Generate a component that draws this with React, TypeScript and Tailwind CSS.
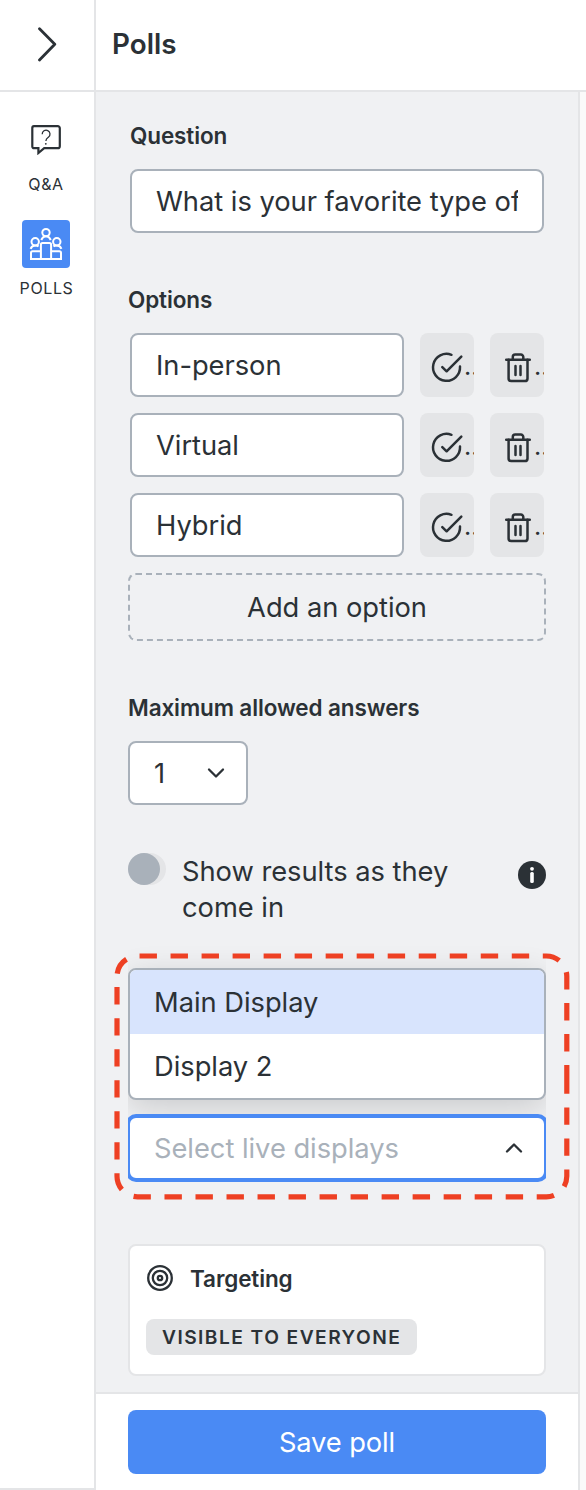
import { useState } from "react";

const INITIAL_OPTIONS = ["In-person", "Virtual", "Hybrid"];
const DISPLAYS = ["Main Display", "Display 2"];

function QuestionIcon() {
  return (
    <svg width="32" height="32" viewBox="0 0 32 32" fill="none" stroke="currentColor" strokeWidth="2.200">
      <path d="M4 3.200h23.800a2 2 0 0 1 2 2v18a2 2 0 0 1-2 2H14.200L8.400 30v-4.800H4a1.700 1.700 0 0 1-1.700-1.800V5A1.800 1.800 0 0 1 4 3.200Z" />
      <path d="M12.200 11.200a3.900 3.900 0 1 1 6.200 3c-1.500 1-2.500 1.600-2.500 3.800" strokeWidth="1.300" />
      <circle cx="15.800" cy="20.800" r=".900" fill="currentColor" stroke="none" />
    </svg>
  );
}

function PollsIcon() {
  return (
    <svg width="48" height="48" viewBox="0 0 48 48" fill="none" stroke="currentColor" strokeWidth="2">
      <circle cx="24" cy="12.600" r="3.700" />
      <circle cx="13.200" cy="21.700" r="3.700" />
      <circle cx="34.800" cy="21.700" r="3.700" />
      <path d="M19.200 20c1.200-2.500 2.800-3.700 4.800-3.700s3.600 1.200 4.800 3.700M8.600 28.800c.8-2.300 2.400-3.400 4.600-3.400 1.400 0 2.500.3 3.400 1M39.400 28.800c-.8-2.300-2.400-3.400-4.600-3.400-1.400 0-2.500.3-3.400 1" />
      <path d="M18.900 39V24.700a1.600 1.600 0 0 1 1.600-1.600h7a1.600 1.600 0 0 1 1.600 1.600V39" />
      <path d="M18.900 31.200h-8.300a1.600 1.600 0 0 0-1.600 1.600V39h30v-6.200a1.600 1.600 0 0 0-1.600-1.600h-8.300" />
    </svg>
  );
}

function CheckCircleIcon() {
  return (
    <svg className="shrink-0" width="34" height="34" viewBox="0 0 34 34" fill="none" stroke="currentColor" strokeWidth="2.500" strokeLinecap="round" strokeLinejoin="round">
      <path d="M21.500 4.800A13.500 13.500 0 1 0 30 16.600" />
      <path d="M12.300 17.200l4.300 4.100L31.300 6.600" />
    </svg>
  );
}

function TrashIcon() {
  return (
    <svg className="shrink-0" width="34" height="34" viewBox="0 0 34 34" fill="none" stroke="currentColor" strokeWidth="2.500" strokeLinecap="round" strokeLinejoin="round">
      <path d="M6.200 9.700h23.600M12.800 9.700V7a2.400 2.400 0 0 1 2.400-2.400h5.700A2.400 2.400 0 0 1 23.300 7v2.700" />
      <path d="M8.600 9.700v18.700a2.700 2.700 0 0 0 2.700 2.700h13.500a2.700 2.700 0 0 0 2.700-2.700V9.700" />
      <path d="M15.500 16v9M20.500 16v9" />
    </svg>
  );
}

function ChevronIcon({ up = false }: { up?: boolean }) {
  return (
    <svg width="18" height="12" viewBox="0 0 18 12" fill="none" stroke="currentColor" strokeWidth="2.300" strokeLinecap="round" strokeLinejoin="round">
      <path d={up ? "M2 9.500 9 2.500l7 7" : "M2 2.500l7 7 7-7"} />
    </svg>
  );
}

function TargetIcon() {
  return (
    <svg width="28" height="28" viewBox="0 0 28 28" fill="none" stroke="currentColor" strokeWidth="2.300">
      <circle cx="14" cy="14" r="11.800" />
      <circle cx="14" cy="14" r="7.200" />
      <circle cx="14" cy="14" r="2.200" />
    </svg>
  );
}

function InfoIcon() {
  return (
    <svg width="28" height="28" viewBox="0 0 28 28">
      <circle cx="14" cy="14" r="14" fill="#2b3136" />
      <circle cx="14" cy="7.800" r="1.900" fill="#fff" />
      <rect x="12.200" y="11" width="3.600" height="11" rx="1.500" fill="#fff" />
    </svg>
  );
}

function Label({ children }: { children: string }) {
  return <h2 className="text-[22.5px] leading-7 font-semibold tracking-[-0.12px]">{children}</h2>;
}

export default function App() {
  const [question, setQuestion] = useState("What is your favorite type of");
  const [options, setOptions] = useState(INITIAL_OPTIONS);

  const changeOption = (index: number, value: string) => {
    setOptions(options.map((option, i) => (i === index ? value : option)));
  };

  return (
    <div className="flex h-[1490px] w-[586px] flex-col overflow-hidden bg-white font-['Inter',sans-serif] text-[#2b3136]">
      <header className="flex h-[92px] shrink-0 border-b-2 border-[#e4e5e7]">
        <button className="flex w-24 items-center justify-center border-r-2 border-[#e4e5e7]" aria-label="Collapse">
          <svg width="20" height="36" viewBox="0 0 20 36" fill="none" stroke="currentColor" strokeWidth="2.800" strokeLinecap="round" strokeLinejoin="round">
            <path d="M2.500 1.800 17.800 17.200 2.500 33" />
          </svg>
        </button>
        <h1 className="pt-[26px] pl-4 text-[27.8px] leading-9 font-semibold">Polls</h1>
      </header>

      <div className="flex min-h-0 flex-1">
        <nav className="flex w-24 shrink-0 flex-col items-center border-r-2 border-b-2 border-[#e4e5e7] pt-[31px] pr-0.5">
          <button className="flex flex-col items-center">
            <QuestionIcon />
            <span className="mt-[19px] text-[16px] leading-5 tracking-[0.6px]">Q&amp;A</span>
          </button>
          <button className="mt-[26px] flex flex-col items-center">
            <span className="rounded bg-[#4a8af4] text-white">
              <PollsIcon />
            </span>
            <span className="mt-[10px] pl-px text-[16px] leading-5 tracking-[0.6px]">POLLS</span>
          </button>
        </nav>

        <main className="flex w-[484px] shrink-0 flex-col border-r-2 border-[#e4e5e7]">
          <div className="flex h-[1300px] flex-col bg-[#f0f1f3] px-8 pt-[30px] text-[27.3px] leading-9 tracking-[-0.03px]">
            <div className="px-0.5">
              <Label>Question</Label>
              <input
                className="mt-[19px] block h-16 w-full rounded-lg border-2 border-[#a9b1ba] bg-white px-6 outline-none"
                value={question}
                onChange={(e) => setQuestion(e.target.value)}
              />
            </div>

            <div className="mt-[53px]">
              <Label>Options</Label>
              <div className="mt-[19px] flex flex-col gap-4 px-0.5">
                {options.map((option, i) => (
                  <div key={i} className="flex gap-4">
                    <input
                      className="h-16 w-[274px] rounded-lg border-2 border-[#a9b1ba] bg-white px-6 outline-none"
                      value={option}
                      onChange={(e) => changeOption(i, e.target.value)}
                    />
                    <button className="flex h-16 w-[54px] items-center overflow-hidden rounded-lg bg-[#e4e5e7] pt-1 pl-2.5">
                      <CheckCircleIcon />
                      <span className="pb-0.5 text-[25px]">...</span>
                    </button>
                    <button className="flex h-16 w-[54px] items-center overflow-hidden rounded-lg bg-[#e4e5e7] pt-1 pl-2.5">
                      <TrashIcon />
                      <span className="pb-0.5 text-[25px]">...</span>
                    </button>
                  </div>
                ))}
              </div>
              <button className="mt-4 h-[68px] w-full rounded-lg border-2 border-dashed border-[#a9b1ba] pt-0.5">
                Add an option
              </button>
            </div>

            <div className="mt-[53px]">
              <Label>Maximum allowed answers</Label>
              <button className="mt-[19px] flex h-16 w-[120px] items-center justify-between rounded-lg border-2 border-[#a9b1ba] bg-white pr-[21px] pl-6">
                <span className="pt-0.5">1</span>
                <ChevronIcon />
              </button>
            </div>

            <div className="mt-12 flex">
              <div className="h-8 w-[38px] shrink-0 rounded-full bg-[#e4e5e7]">
                <div className="size-8 rounded-full bg-[#a9b1ba]" />
              </div>
              <p className="mt-px ml-4 w-[280px]">Show results as they come in</p>
              <div className="mt-2 ml-auto">
                <InfoIcon />
              </div>
            </div>

            <div className="relative mt-[42px]">
              <div className="overflow-x-clip">
                <ul className="rounded-lg border-2 border-[#a9b1ba] bg-white shadow-[0_8px_32px_rgba(0,0,0,0.16)]">
                  {DISPLAYS.map((display) => (
                    <li key={display} className="flex h-16 items-center px-6 pt-0.5 first:rounded-t-md first:bg-[#d8e4fd]">
                      {display}
                    </li>
                  ))}
                </ul>
                <div className="relative mt-4 flex h-16 items-center justify-between rounded-lg border-2 border-[#4a8af4] bg-white pr-[21px] pl-6 shadow-[0_0_0_2px_#4a8af4]">
                  <span className="pt-0.5 text-[#a9b1ba]">Select live displays</span>
                  <ChevronIcon up />
                </div>
              </div>
              {/* dashed callout around the display picker */}
              <svg className="pointer-events-none absolute -top-4 -left-4" width="460" height="252" viewBox="112 952 460 252" fill="none">
                <path
                  d="M566.800 1076.400V1176.300a20.500 20.500 0 0 1-20.500 20.500H137.500a20.500 20.500 0 0 1-20.500-20.500V976.500a20.500 20.500 0 0 1 20.500-20.500H546.300a20.500 20.500 0 0 1 20.500 20.500Z"
                  stroke="#ee4023"
                  strokeWidth="5.200"
                  strokeDasharray="17.400 13.620"
                />
              </svg>
            </div>

            <section className="mt-16 h-[132px] rounded-lg border-2 border-[#e4e5e7] bg-white px-4 pt-[18px]">
              <div className="flex h-7 items-center gap-4">
                <TargetIcon />
                <div className="pt-0.5">
                  <Label>Targeting</Label>
                </div>
              </div>
              <span className="mt-[27px] flex h-9 w-[271px] items-center rounded-lg bg-[#e4e5e7] pl-4 text-[19.2px] leading-6 font-semibold tracking-[1.450px]">
                VISIBLE TO EVERYONE
              </span>
            </section>
          </div>

          <footer className="flex-1 border-t-2 border-[#e4e5e7] px-8 pt-4">
            <button className="h-16 w-full rounded-lg bg-[#4a8af4] pt-0.5 text-[27.3px] leading-9 tracking-[-0.1px] text-white">Save poll</button>
          </footer>
        </main>
        <div className="flex-1 bg-[#fafafa]" />
      </div>
    </div>
  );
}
